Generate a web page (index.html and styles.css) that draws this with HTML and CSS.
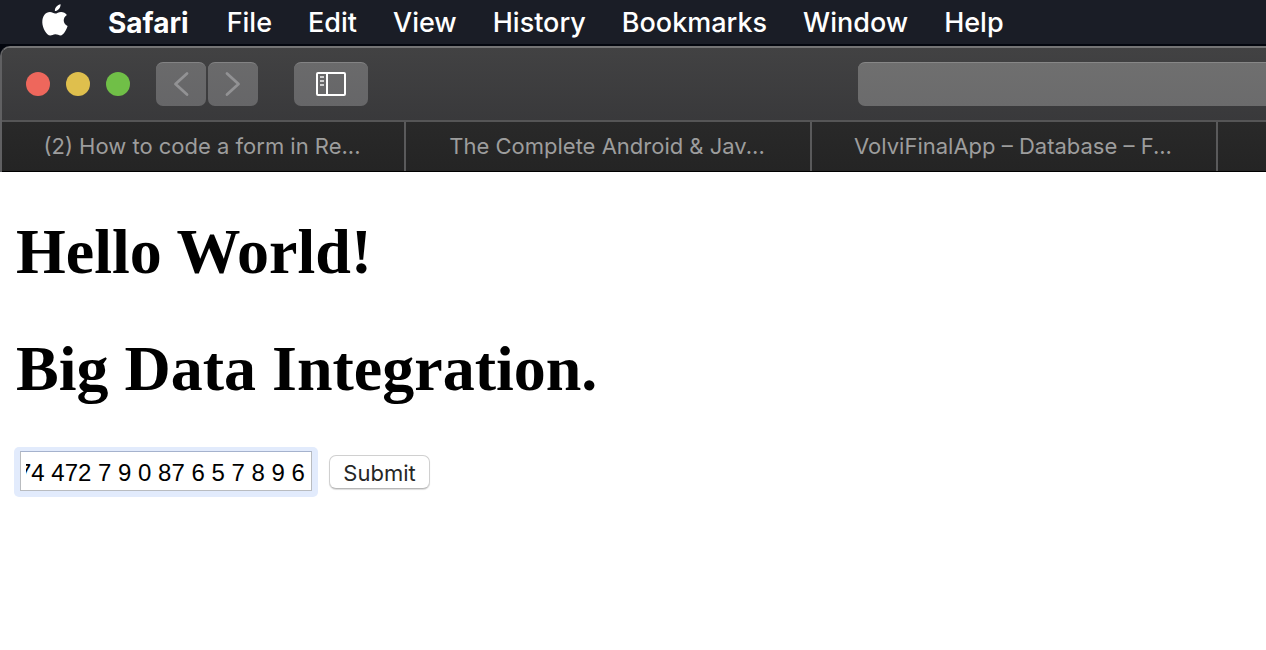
FILE: index.html
```html
<!DOCTYPE html>
<html lang="en">
<head>
<meta charset="utf-8">
<title>Hello World!</title>
<link rel="stylesheet" href="styles.css">
</head>
<body>
<div class="desktop">
  <nav class="menubar" aria-label="Menu bar">
    <button class="menu apple" aria-label="Apple menu">
      <svg width="26" height="32" viewBox="0 0 26 32" aria-hidden="true"><path d="M18.6 0.2C18.8 3.8 15.9 7 12.9 7C12.5 3.6 15.7 0.5 18.6 0.2ZM24.9 10.9C20.4 13.7 20.8 19.7 25.6 21.9C24.7 24.7 21.8 31.2 18.5 31.4C16.7 31.4 15.7 30.2 13.4 30.2C11 30.2 10.1 31.5 8.3 31.5C4.5 31.5 0.4 23.9 0.3 18.5C0.2 11.9 3.7 8.1 7.9 8.1C10.1 8.1 11.8 9.6 13.2 9.6C14.7 9.6 16.6 7.9 19.1 7.9C21.4 7.9 23.6 8.9 24.9 10.9Z" fill="#fff"/></svg>
    </button>
    <button class="menu app">Safari</button>
    <button class="menu">File</button>
    <button class="menu">Edit</button>
    <button class="menu">View</button>
    <button class="menu">History</button>
    <button class="menu">Bookmarks</button>
    <button class="menu">Window</button>
    <button class="menu">Help</button>
  </nav>
  <div class="window">
    <header class="toolbar">
      <div class="lights">
        <button class="light close" aria-label="Close"></button>
        <button class="light minimize" aria-label="Minimize"></button>
        <button class="light expand" aria-label="Full screen"></button>
      </div>
      <div class="history">
        <button class="tool" aria-label="Back"><svg width="16" height="26" viewBox="0 0 16 26" aria-hidden="true"><path d="M14 2.5L2.5 13L14 23.500" fill="none" stroke="#929294" stroke-width="2.800" stroke-linecap="round" stroke-linejoin="round"/></svg></button>
        <button class="tool" aria-label="Forward"><svg width="16" height="26" viewBox="0 0 16 26" aria-hidden="true"><path d="M2 2.5L13.500 13L2 23.500" fill="none" stroke="#929294" stroke-width="2.800" stroke-linecap="round" stroke-linejoin="round"/></svg></button>
      </div>
      <button class="tool sidebar" aria-label="Show sidebar"><svg width="30" height="24" viewBox="0 0 30 24" aria-hidden="true"><rect x="1" y="1" width="28" height="22" rx="1" fill="none" stroke="#fff" stroke-width="2"/><path d="M11 1V23" stroke="#fff" stroke-width="2"/><path d="M4 5H8M4 9H8M4 13H8" stroke="#d0d0d0" stroke-width="2"/></svg></button>
      <input class="address" type="text" aria-label="Address">
    </header>
    <nav class="tabs" aria-label="Tabs">
      <a class="tab" href="#">(2) How to code a form in Re...</a>
      <a class="tab" href="#">The Complete Android &amp; Jav...</a>
      <a class="tab" href="#">VolviFinalApp – Database – F...</a>
      <span class="tab"></span>
    </nav>
  </div>
</div>
<main class="page">
  <h1>Hello World!</h1>
  <h1>Big Data Integration.</h1>
  <form class="form">
    <span class="focus-ring"><input class="field" type="text" aria-label="Data" value="74 472 7 9 0 87 6 5 7 8 9 6"></span>
    <button class="submit" type="submit">Submit</button>
  </form>
</main>
<script src="script.js"></script>
</body>
</html>
```
FILE: styles.css
```css
* { box-sizing: border-box; }

body {
  margin: 0;
  background: #fff;
  font-family: Inter, "Liberation Sans", sans-serif;
  overflow-x: hidden;
}

button, input {
  font-family: inherit;
  margin: 0;
}

.desktop {
  background: #03060e;
  overflow: hidden;
}

.menubar {
  display: flex;
  align-items: center;
  gap: 36px;
  height: 44px;
  padding-left: 42px;
  background: #1a1d26;
}

.menu {
  border: 0;
  padding: 2px 0 0;
  background: none;
  color: #fff;
  font-size: 27px;
  font-weight: 500;
  line-height: 42px;
}

.menu.app {
  margin-right: 2px;
  font-size: 28px;
  font-weight: 700;
}

.menu.apple {
  display: flex;
  margin-right: 4px;
  padding: 0 0 4px;
}

.window {
  margin-top: 2px;
  border-top: 2px solid #747475;
  border-left: 2px solid #606062;
  border-radius: 10px 0 0 0;
  background: #272727;
  overflow: hidden;
}

.toolbar {
  display: flex;
  align-items: center;
  height: 72px;
  padding-left: 24px;
  background: linear-gradient(#424243, #39393b);
}

.lights {
  display: flex;
  gap: 16px;
}

.light {
  width: 24px;
  height: 24px;
  padding: 0;
  border: 0;
  border-radius: 50%;
}

.close { background: #ee675c; }
.minimize { background: #dfbf4d; }
.expand { background: #70bf47; }

.history {
  display: flex;
  gap: 2px;
  margin-left: 26px;
}

.tool {
  display: flex;
  align-items: center;
  justify-content: center;
  width: 50px;
  height: 44px;
  padding: 0 0 1px;
  border: 0;
  border-top: 1px solid #838384;
  border-radius: 7px;
  background: linear-gradient(#6a6a6b, #666668);
}

.sidebar {
  width: 74px;
  margin-left: 36px;
}

.address {
  flex: 1;
  min-width: 0;
  height: 44px;
  margin-left: 490px;
  padding: 0 12px;
  border: 0;
  border-top: 1px solid #878787;
  border-radius: 7px 0 0 7px;
  background: linear-gradient(#6f6f6f, #6b6b6c);
  color: #fff;
  font-size: 22px;
}

.tabs {
  display: flex;
  height: 52px;
  border-top: 2px solid #555556;
  border-bottom: 1px solid #000;
  background: linear-gradient(#292929, #242424);
}

.tab {
  flex: 0 0 406px;
  padding: 0 18px 0 16px;
  border-right: 2px solid #5a5a5b;
  color: #9d9d9d;
  font-size: 22px;
  line-height: 48px;
  text-align: center;
  text-decoration: none;
  white-space: nowrap;
}

.tab:first-child { flex-basis: 404px; }

.page { padding: 43px 16px; }

h1 {
  margin: 0 0 43px;
  font-family: "Liberation Serif", serif;
  font-size: 64px;
  font-weight: 700;
  line-height: 74px;
}

.form {
  display: flex;
  align-items: baseline;
  gap: 11px;
  margin: -2px 0 0 -2px;
}

.focus-ring {
  display: flex;
  padding: 4px 6px 6px;
  border-radius: 5px;
  background: #e2ebfc;
}

.field {
  width: 292px;
  height: 40px;
  padding: 4px 6px 0 5px;
  border: 1px solid #b9bcc0;
  border-top-color: #a5b2cd;
  border-radius: 0;
  outline: 0;
  background: #fff;
  font-family: "Liberation Sans", Arial, sans-serif;
  font-size: 24px;
  color: #000;
}

.submit {
  height: 34px;
  width: 101px;
  padding: 2px 0 0;
  border: 1px solid #d0d0d0;
  border-bottom-color: #b8b8b8;
  border-radius: 7px;
  box-shadow: 0 1px 1px #dcdcdc;
  background: #fff;
  color: #262626;
  font-size: 22px;
  line-height: 30px;
}
```
FILE: script.js
```js
// Keep the end of the entered value in view.
const field = document.querySelector('.field');
field.scrollLeft = field.scrollWidth;
```
